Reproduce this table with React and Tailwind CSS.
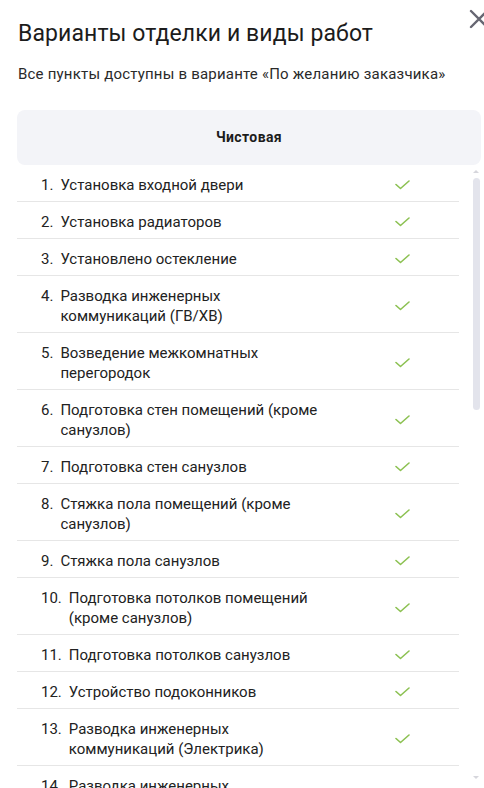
import React from 'react';

const items = [
  ['1.', ['Установка входной двери']],
  ['2.', ['Установка радиаторов']],
  ['3.', ['Установлено остекление']],
  ['4.', ['Разводка инженерных', 'коммуникаций (ГВ/ХВ)']],
  ['5.', ['Возведение межкомнатных', 'перегородок']],
  ['6.', ['Подготовка стен помещений (кроме', 'санузлов)']],
  ['7.', ['Подготовка стен санузлов']],
  ['8.', ['Стяжка пола помещений (кроме', 'санузлов)']],
  ['9.', ['Стяжка пола санузлов']],
  ['10.', ['Подготовка потолков помещений', '(кроме санузлов)']],
  ['11.', ['Подготовка потолков санузлов']],
  ['12.', ['Устройство подоконников']],
  ['13.', ['Разводка инженерных', 'коммуникаций (Электрика)']],
  ['14.', ['Разводка инженерных', 'коммуникаций (Отопление)']],
];

function Check() {
  return (
    <svg width="15" height="10" viewBox="0 0 15 10" fill="none">
      <path d="M1 4.5 L5.5 8.5 L14 1" stroke="#8cc152" strokeWidth="1.6" strokeLinecap="round" strokeLinejoin="round" />
    </svg>
  );
}

export default function App() {
  return (
    <div className="relative h-[788px] w-[484px] overflow-hidden bg-white font-['Roboto',sans-serif] text-[#1c1c1c]">
      {/* close */}
      <button className="absolute left-[469px] top-[9px]">
        <svg width="20" height="20" viewBox="0 0 20 20" fill="none">
          <path d="M2 2 L18 18 M18 2 L2 18" stroke="#666672" strokeWidth="2.4" strokeLinecap="round" />
        </svg>
      </button>

      <div className="pl-[17px] pr-[3px] pt-[20px]">
        <h1 className="pl-px text-[23px] leading-[28px] font-normal tracking-[0.1px]">Варианты отделки и виды работ</h1>
        <p className="mt-[16px] pl-px text-[15px] leading-[20px] tracking-[0.2px] text-[#2a2a2a]">
          Все пункты доступны в варианте «По желанию заказчика»
        </p>

        <div className="mt-[26px] flex h-[55px] items-center justify-center rounded-lg bg-[#f3f4f8] text-[14px] font-bold tracking-[0.4px]">
          Чистовая
        </div>

        <div className="flex h-[623px]">
          <ul className="w-[442px] overflow-hidden">
            {items.map(([n, lines]) => (
              <li key={n} className="flex items-center border-b border-[#e6e6e6] pt-[10px] pb-[6px] pl-[24px] pr-[49px] text-[15px] leading-[20px] text-[#222]">
                <div className="flex items-start">
                  <span className="mr-[7px] whitespace-nowrap">{n}</span>
                  <span className="whitespace-nowrap">
                    {lines.map((l, i) => (
                      <span key={i} className="block">{l}</span>
                    ))}
                  </span>
                </div>
                <span className="ml-auto flex">
                  <Check />
                </span>
              </li>
            ))}
          </ul>

          {/* scrollbar */}
          <div className="ml-auto flex w-[10px] flex-col items-center">
            <div className="mt-[5px] h-0 w-0 border-x-[3px] border-b-[3px] border-x-transparent border-b-[#d6d6dc]"></div>
            <div className="mt-[5px] h-[232px] w-[7px] rounded-full bg-[#e3e4ec]"></div>
            <div className="flex-1"></div>
            <div className="mb-[9px] h-0 w-0 border-x-[3px] border-t-[3px] border-x-transparent border-t-[#d6d6dc]"></div>
          </div>
        </div>
      </div>
    </div>
  );
}
